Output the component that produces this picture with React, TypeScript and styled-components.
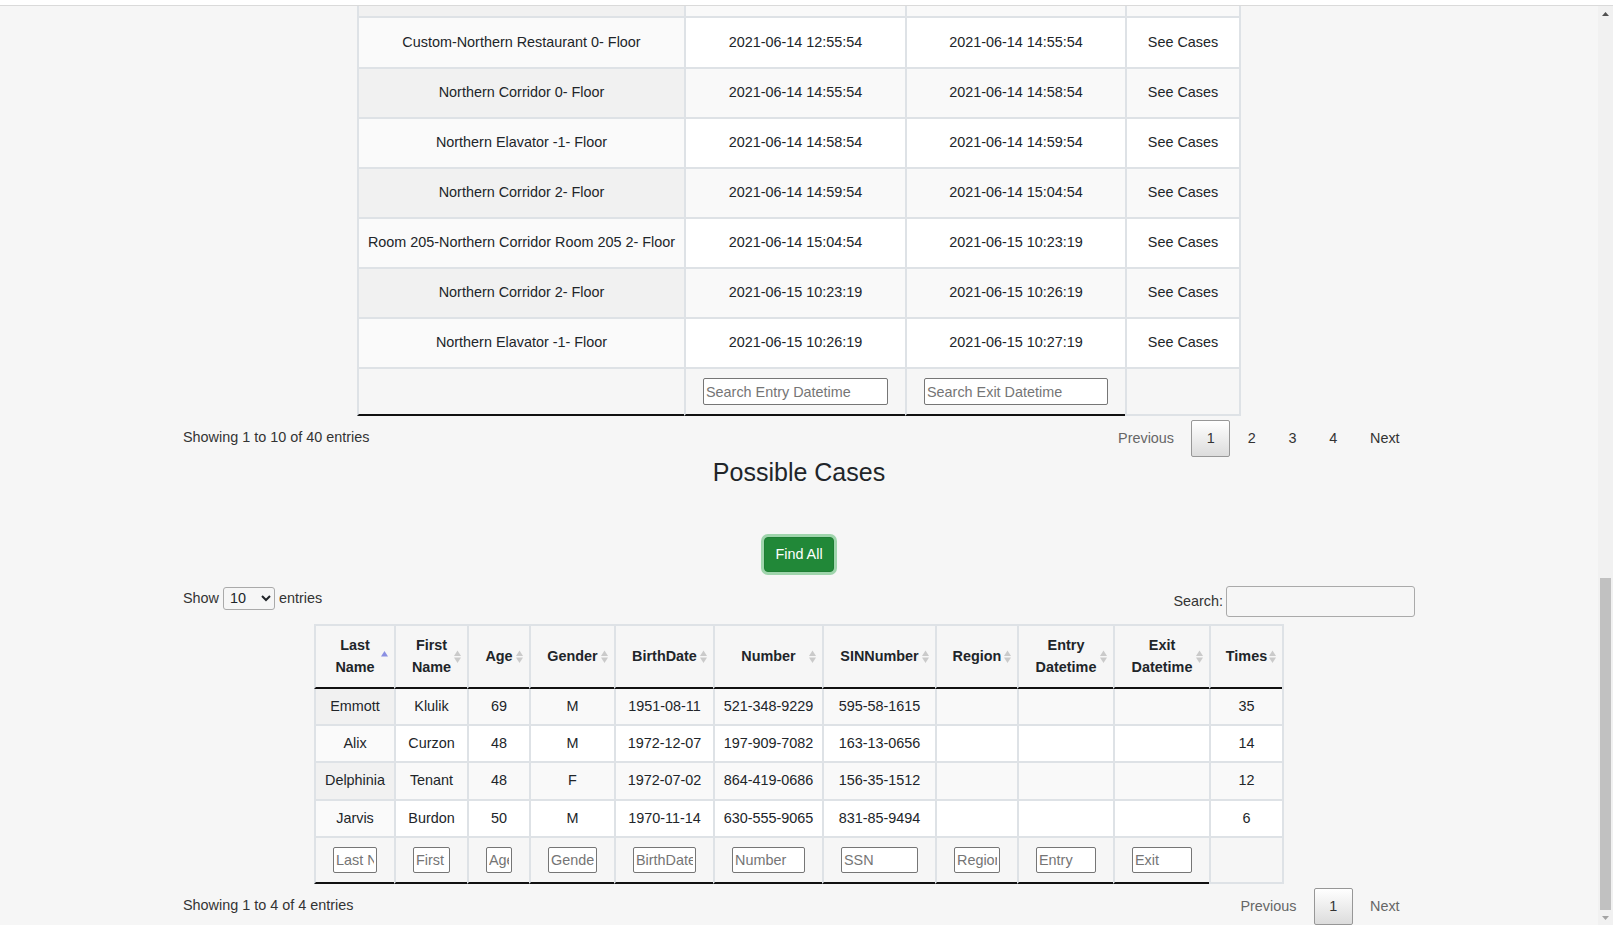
import React from 'react';
import styled, { createGlobalStyle, css } from 'styled-components';

const BORDER = '#dee2e6';

const GlobalStyle = createGlobalStyle`
  html, body {
    margin: 0;
    padding: 0;
    height: 100%;
    overflow: hidden;
  }
  body {
    background: #f6f6f6;
    font-family: "Liberation Sans", Arial, sans-serif;
    font-size: 14.4px;
    line-height: 1.5;
    color: #212529;
  }
  *, *::before, *::after {
    box-sizing: border-box;
  }
`;

const Frame = styled.div`
  display: flex;
  flex-direction: column;
  height: 925px;
`;

const TopStrip = styled.div`
  flex: none;
  height: 6px;
  background: #fff;
  border-bottom: 1px solid #dadada;
`;

const Viewport = styled.div`
  flex: 1;
  min-height: 0;
  display: flex;
`;

// page is scrolled to the very bottom, so content hangs from the lower edge
const Scroller = styled.main`
  flex: 1;
  min-width: 0;
  overflow: hidden;
  display: flex;
  flex-direction: column;
  justify-content: flex-end;
`;

const Page = styled.div`
  flex: none;
  width: 1232px;
  margin: 0 auto;
`;

const ScrollBar = styled.div`
  flex: none;
  width: 15px;
  background: #f1f1f1;
  display: flex;
  flex-direction: column;
`;

const ScrollArrow = styled.div<{ $dim?: boolean }>`
  height: 15px;
  display: flex;
  align-items: center;
  justify-content: center;
  color: ${({ $dim }) => ($dim ? '#a3a3a3' : '#505050')};
`;

const ScrollTrack = styled.div`
  flex: 1;
  display: flex;
  flex-direction: column;
  justify-content: flex-end;
  padding: 0 2px;
`;

const ScrollThumb = styled.div`
  height: 332px;
  background: #c1c1c1;
`;

const Table = styled.table<{ $w: number }>`
  width: ${({ $w }) => $w}px;
  margin: 0 auto;
  table-layout: fixed;
  border-collapse: separate;
  border-spacing: 0;
  border-right: 2px solid ${BORDER};
`;

const Col = styled.col<{ $w: number }>`
  width: ${({ $w }) => $w}px;
`;

const HeadCell = styled.th`
  position: relative;
  padding: 8.5px 10px;
  font-weight: 700;
  line-height: 21.6px;
  text-align: center;
  vertical-align: middle;
  border-left: 2px solid ${BORDER};
  border-top: 2px solid ${BORDER};
  border-bottom: 2px solid #111;
`;

const BodyCell = styled.td<{ $odd: boolean; $sorted: boolean; $tall?: boolean }>`
  padding: ${({ $tall }) => ($tall ? '13.25px 8px' : '6.9px 8px')};
  line-height: 21.6px;
  text-align: center;
  vertical-align: middle;
  white-space: nowrap;
  border-left: 2px solid ${BORDER};
  border-bottom: 2px solid ${BORDER};
  background: ${({ $odd, $sorted }) =>
    $odd ? ($sorted ? '#f1f1f1' : '#f9f9f9') : $sorted ? '#fafafa' : '#fff'};
`;

const FootCell = styled.th<{ $open?: boolean }>`
  padding: 9px 17px;
  font-weight: 400;
  border-left: 2px solid ${BORDER};
  border-bottom: 2px solid ${({ $open }) => ($open ? BORDER : '#111')};
`;

const FilterInput = styled.input<{ $h: number }>`
  display: block;
  width: 100%;
  height: ${({ $h }) => $h}px;
  padding: 1px 2px;
  border: 1px solid #767676;
  border-radius: 2px;
  background: #fff;
  font-family: inherit;
  font-size: 14.4px;
  color: #212529;
  &::placeholder {
    color: #757575;
  }
`;

const SortMark = styled.svg`
  position: absolute;
  right: 0;
  top: 50%;
  margin-top: -9.5px;
`;

const InfoRow = styled.div`
  display: flex;
  justify-content: space-between;
  align-items: flex-start;
  color: #333;
`;

const Info = styled.div`
  padding-top: 0.755em;
`;

const Pager = styled.div`
  display: flex;
  padding-top: 0.25em;
`;

const PageButton = styled.span<{ $current?: boolean; $disabled?: boolean }>`
  min-width: 1.5em;
  padding: 0.5em 1em;
  margin-left: 2px;
  text-align: center;
  line-height: 1.45;
  border: 1px solid transparent;
  border-radius: 2px;
  color: ${({ $disabled }) => ($disabled ? '#666' : '#333')};
  cursor: pointer;
  ${({ $current }) =>
    $current &&
    css`
      border-color: #979797;
      background: linear-gradient(to bottom, #fff 0%, #dcdcdc 100%);
    `}
`;

const Title = styled.h2`
  margin: 0 0 50px;
  font-size: 25px;
  line-height: 30px;
  font-weight: 400;
  text-align: center;
  color: #212529;
`;

const ButtonRow = styled.div`
  display: flex;
  justify-content: center;
  margin-bottom: 14px;
`;

const SuccessButton = styled.button`
  height: 35px;
  padding: 0 10.5px;
  font-family: inherit;
  font-size: 14.4px;
  color: #fff;
  background: #218838;
  border: 1px solid #1e7e34;
  border-radius: 4px;
  box-shadow: 0 0 0 3px rgba(72, 180, 97, 0.5);
`;

const Controls = styled.div`
  display: flex;
  justify-content: space-between;
  align-items: flex-start;
  margin-bottom: 7.5px;
  color: #333;
`;

const LengthLabel = styled.label`
  display: flex;
  align-items: center;
  gap: 4px;
  margin-top: 1px;
`;

const LengthSelect = styled.select`
  width: 52px;
  height: 23px;
  padding: 0 2px;
  border: 1px solid #aaa;
  border-radius: 3px;
  background: transparent;
  font-family: inherit;
  font-size: 14.4px;
  color: #212529;
`;

const SearchLabel = styled.label`
  display: flex;
  align-items: center;
  gap: 3px;
`;

const SearchInput = styled.input`
  width: 189px;
  height: 31px;
  padding: 5px;
  border: 1px solid #aaa;
  border-radius: 3px;
  background: transparent;
  font-family: inherit;
  font-size: 14.4px;
`;

const SortIcon = ({ active }: { active?: boolean }) => (
  <SortMark width="19" height="19" viewBox="0 0 19 19" aria-hidden>
    {active ? (
      <path d="M6 9.5 9.5 4 13 9.5Z" fill="#8a8fe2" />
    ) : (
      <>
        <path d="M6 9 9.5 3.5 13 9Z" fill="#cacaca" />
        <path d="M6 10.5H13L9.5 16Z" fill="#cacaca" />
      </>
    )}
  </SortMark>
);

const Pagination = ({ pages, last }: { pages: number; last: boolean }) => (
  <Pager>
    <PageButton $disabled>Previous</PageButton>
    {Array.from({ length: pages }, (_, i) => (
      <PageButton key={i} $current={i === 0}>
        {i + 1}
      </PageButton>
    ))}
    <PageButton $disabled={last}>Next</PageButton>
  </Pager>
);

const visits = [
  ['Northern Entrance 0- Floor', '2021-06-14 12:50:54', '2021-06-14 12:55:54'],
  ['Custom-Northern Restaurant 0- Floor', '2021-06-14 12:55:54', '2021-06-14 14:55:54'],
  ['Northern Corridor 0- Floor', '2021-06-14 14:55:54', '2021-06-14 14:58:54'],
  ['Northern Elavator -1- Floor', '2021-06-14 14:58:54', '2021-06-14 14:59:54'],
  ['Northern Corridor 2- Floor', '2021-06-14 14:59:54', '2021-06-14 15:04:54'],
  ['Room 205-Northern Corridor Room 205 2- Floor', '2021-06-14 15:04:54', '2021-06-15 10:23:19'],
  ['Northern Corridor 2- Floor', '2021-06-15 10:23:19', '2021-06-15 10:26:19'],
  ['Northern Elavator -1- Floor', '2021-06-15 10:26:19', '2021-06-15 10:27:19'],
];

const caseColumns = [
  { label: 'Last Name', w: 80, filter: 'Last Name' },
  { label: 'First Name', w: 73, filter: 'First' },
  { label: 'Age', w: 62, filter: 'Age' },
  { label: 'Gender', w: 85, filter: 'Gender' },
  { label: 'BirthDate', w: 99, filter: 'BirthDate' },
  { label: 'Number', w: 109, filter: 'Number' },
  { label: 'SINNumber', w: 113, filter: 'SSN' },
  { label: 'Region', w: 82, filter: 'Region' },
  { label: 'Entry Datetime', w: 96, filter: 'Entry' },
  { label: 'Exit Datetime', w: 96, filter: 'Exit' },
  { label: 'Times', w: 73, filter: '' },
];

const cases = [
  ['Emmott', 'Klulik', '69', 'M', '1951-08-11', '521-348-9229', '595-58-1615', '', '', '', '35'],
  ['Alix', 'Curzon', '48', 'M', '1972-12-07', '197-909-7082', '163-13-0656', '', '', '', '14'],
  ['Delphinia', 'Tenant', '48', 'F', '1972-07-02', '864-419-0686', '156-35-1512', '', '', '', '12'],
  ['Jarvis', 'Burdon', '50', 'M', '1970-11-14', '630-555-9065', '831-85-9494', '', '', '', '6'],
];

const VisitsTable = () => (
  <Table $w={884}>
    <colgroup>
      <Col $w={327} />
      <Col $w={221} />
      <Col $w={220} />
      <Col $w={114} />
    </colgroup>
    <thead>
      <tr>
        <HeadCell>Location<SortIcon /></HeadCell>
        <HeadCell>Entry Datetime<SortIcon active /></HeadCell>
        <HeadCell>Exit Datetime<SortIcon /></HeadCell>
        <HeadCell>Cases</HeadCell>
      </tr>
    </thead>
    <tbody>
      {visits.map((v, i) => (
        <tr key={i}>
          <BodyCell $tall $odd={i % 2 === 0} $sorted>{v[0]}</BodyCell>
          <BodyCell $tall $odd={i % 2 === 0} $sorted={false}>{v[1]}</BodyCell>
          <BodyCell $tall $odd={i % 2 === 0} $sorted={false}>{v[2]}</BodyCell>
          <BodyCell $tall $odd={i % 2 === 0} $sorted={false}>See Cases</BodyCell>
        </tr>
      ))}
    </tbody>
    <tfoot>
      <tr>
        <FootCell />
        <FootCell>
          <FilterInput $h={27} placeholder="Search Entry Datetime" />
        </FootCell>
        <FootCell>
          <FilterInput $h={27} placeholder="Search Exit Datetime" />
        </FootCell>
        <FootCell $open />
      </tr>
    </tfoot>
  </Table>
);

const CasesTable = () => (
  <Table $w={970}>
    <colgroup>
      {caseColumns.map((c) => (
        <Col key={c.label} $w={c.w} />
      ))}
    </colgroup>
    <thead>
      <tr>
        {caseColumns.map((c, i) => (
          <HeadCell key={c.label}>
            {c.label}
            <SortIcon active={i === 0} />
          </HeadCell>
        ))}
      </tr>
    </thead>
    <tbody>
      {cases.map((row, r) => (
        <tr key={r}>
          {row.map((v, c) => (
            <BodyCell key={c} $odd={r % 2 === 0} $sorted={c === 0}>
              {v}
            </BodyCell>
          ))}
        </tr>
      ))}
    </tbody>
    <tfoot>
      <tr>
        {caseColumns.map((c) =>
          c.filter ? (
            <FootCell key={c.label}>
              <FilterInput $h={26} placeholder={c.filter} />
            </FootCell>
          ) : (
            <FootCell key={c.label} $open />
          ),
        )}
      </tr>
    </tfoot>
  </Table>
);

export default function App() {
  return (
    <>
      <GlobalStyle />
      <Frame>
        <TopStrip />
        <Viewport>
          <Scroller>
            <Page>
              <VisitsTable />
              <InfoRow>
                <Info>Showing 1 to 10 of 40 entries</Info>
                <Pagination pages={4} last={false} />
              </InfoRow>

              <Title>Possible Cases</Title>
              <ButtonRow>
                <SuccessButton>Find All</SuccessButton>
              </ButtonRow>

              <Controls>
                <LengthLabel>
                  Show
                  <LengthSelect defaultValue="10">
                    <option value="10">10</option>
                    <option value="25">25</option>
                    <option value="50">50</option>
                    <option value="100">100</option>
                  </LengthSelect>
                  entries
                </LengthLabel>
                <SearchLabel>
                  Search:
                  <SearchInput type="search" />
                </SearchLabel>
              </Controls>

              <CasesTable />
              <InfoRow>
                <Info>Showing 1 to 4 of 4 entries</Info>
                <Pagination pages={1} last />
              </InfoRow>
            </Page>
          </Scroller>
          <ScrollBar>
            <ScrollArrow>
              <svg width="7" height="4" viewBox="0 0 7 4">
                <path d="M0 4 3.5 0 7 4Z" fill="currentColor" />
              </svg>
            </ScrollArrow>
            <ScrollTrack>
              <ScrollThumb />
            </ScrollTrack>
            <ScrollArrow $dim>
              <svg width="7" height="4" viewBox="0 0 7 4">
                <path d="M0 0H7L3.5 4Z" fill="currentColor" />
              </svg>
            </ScrollArrow>
          </ScrollBar>
        </Viewport>
      </Frame>
    </>
  );
}
